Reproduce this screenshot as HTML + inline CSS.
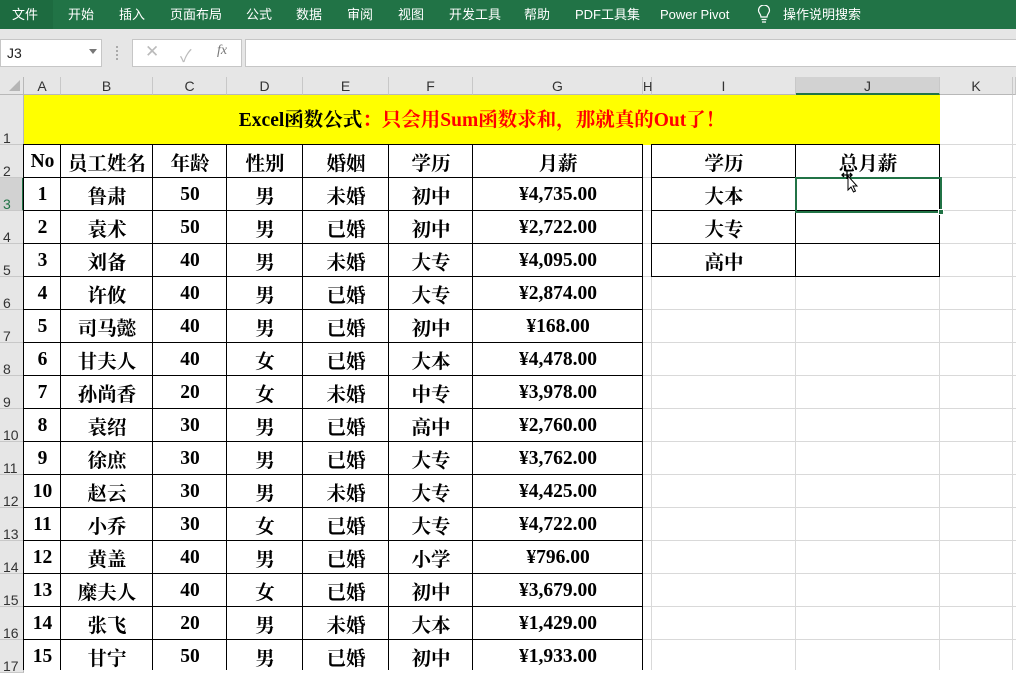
<!DOCTYPE html>
<html><head><meta charset="utf-8"><style>
*{margin:0;padding:0;box-sizing:border-box}
body{width:1016px;height:670px;overflow:hidden;background:#fff;position:relative;font-family:"Liberation Sans","Noto Sans CJK SC",sans-serif}
.rib{position:absolute;left:0;top:0;width:1016px;height:29px;background:#217346;color:#fff;font-size:13px}
.rib span{position:absolute;top:0;height:29px;line-height:29px;white-space:nowrap}
.band{position:absolute;left:0;top:29px;width:1016px;height:48px;background:#e6e6e6}
.box{position:absolute;background:#fff;border:1px solid #c6c6c6}
.ch{position:absolute;top:77px;height:18px;background:#e6e6e6;font-size:14px;color:#333;text-align:center;line-height:19px;border-right:1px solid #c8c8c8;border-bottom:1px solid #b8b8b8}
.rh{position:absolute;left:0;width:24px;background:#e6e6e6;font-size:14px;color:#333;border-bottom:1px solid #c8c8c8;border-right:1px solid #b8b8b8}
.rh i{position:absolute;left:3px;bottom:-2px;font-style:normal}
table{position:absolute;border-spacing:0;table-layout:fixed;font-family:"Liberation Serif","Noto Serif CJK SC",serif;font-weight:bold;font-size:19.5px;color:#000}
td{height:33px;text-align:center;padding:0;white-space:nowrap}
</style></head><body>
<div class="rib">
<div style="position:absolute;left:0;top:0;width:53px;height:29px;background:#1d6b40"></div>
<span style="left:12px">文件</span><span style="left:68px">开始</span><span style="left:119px">插入</span><span style="left:170px">页面布局</span><span style="left:246px">公式</span><span style="left:296px">数据</span><span style="left:347px">审阅</span><span style="left:398px">视图</span><span style="left:449px">开发工具</span><span style="left:524px">帮助</span><span style="left:575px">PDF工具集</span><span style="left:660px">Power Pivot</span>
<svg style="position:absolute;left:757px;top:5px" width="14" height="19" viewBox="0 0 14 19"><path d="M4 12 C4 9 1.5 8 1.5 5.5 A5.5 5.5 0 0 1 12.5 5.5 C12.5 8 10 9 10 12 Z M4.5 14.5h5 M5 17h4" fill="none" stroke="#fff" stroke-width="1.2"/></svg>
<span style="left:783px">操作说明搜索</span>
</div>
<div class="band"></div>
<div class="box" style="left:0;top:39px;width:102px;height:28px"><span style="position:absolute;left:6px;top:5px;font-size:14px;color:#222">J3</span><span style="position:absolute;left:88px;top:9px;width:0;height:0;border-left:4px solid transparent;border-right:4px solid transparent;border-top:5px solid #777"></span></div>
<div style="position:absolute;left:116px;top:46px;width:2px;height:14px;border-left:2px dotted #aaa"></div>
<div class="box" style="left:132px;top:39px;width:110px;height:28px;color:#bbb;font-size:17px"><span style="position:absolute;left:12px;top:2px">✕</span><span style="position:absolute;left:47px;top:2px">✓</span><span style="position:absolute;left:84px;top:3px;font-family:'Liberation Serif',serif;font-style:italic;color:#777;font-size:14px">fx</span></div>
<div class="box" style="left:245px;top:39px;width:780px;height:28px"></div>

<div style="position:absolute;left:0;top:77px;width:24px;height:18px;background:#e6e6e6;border-right:1px solid #b8b8b8;border-bottom:1px solid #b8b8b8"><div style="position:absolute;right:3px;bottom:3px;width:0;height:0;border-left:11px solid transparent;border-bottom:11px solid #b5b5b5"></div></div>
<div class="ch" style="left:24px;width:37px">A</div>
<div class="ch" style="left:61px;width:92px">B</div>
<div class="ch" style="left:153px;width:74px">C</div>
<div class="ch" style="left:227px;width:76px">D</div>
<div class="ch" style="left:303px;width:86px">E</div>
<div class="ch" style="left:389px;width:84px">F</div>
<div class="ch" style="left:473px;width:170px">G</div>
<div class="ch" style="left:643px;width:9px;font-size:13px">H</div>
<div class="ch" style="left:652px;width:144px">I</div>
<div class="ch" style="left:796px;width:144px;background:#d2d2d2;border-bottom:2px solid #217346">J</div>
<div class="ch" style="left:940px;width:73px">K</div>
<div class="ch" style="left:1013px;width:3px"></div>

<div class="rh" style="top:95px;height:50px"><i>1</i></div>
<div class="rh" style="top:145px;height:33px"><i>2</i></div>
<div class="rh" style="top:178px;height:33px;background:#d2d2d2;border-right:2px solid #217346;color:#217346"><i>3</i></div>
<div class="rh" style="top:211px;height:33px"><i>4</i></div>
<div class="rh" style="top:244px;height:33px"><i>5</i></div>
<div class="rh" style="top:277px;height:33px"><i>6</i></div>
<div class="rh" style="top:310px;height:33px"><i>7</i></div>
<div class="rh" style="top:343px;height:33px"><i>8</i></div>
<div class="rh" style="top:376px;height:33px"><i>9</i></div>
<div class="rh" style="top:409px;height:33px"><i>10</i></div>
<div class="rh" style="top:442px;height:33px"><i>11</i></div>
<div class="rh" style="top:475px;height:33px"><i>12</i></div>
<div class="rh" style="top:508px;height:33px"><i>13</i></div>
<div class="rh" style="top:541px;height:33px"><i>14</i></div>
<div class="rh" style="top:574px;height:33px"><i>15</i></div>
<div class="rh" style="top:607px;height:33px"><i>16</i></div>
<div class="rh" style="top:640px;height:33px"><i>17</i></div>

<svg style="position:absolute;left:0;top:0" width="1016" height="670">
<g stroke="#d9d9d9" stroke-width="1">
<path d="M24 144.5H1016 M24 177.5H1016 M24 210.5H1016 M24 243.5H1016 M24 276.5H1016 M24 309.5H1016 M24 342.5H1016 M24 375.5H1016 M24 408.5H1016 M24 441.5H1016 M24 474.5H1016 M24 507.5H1016 M24 540.5H1016 M24 573.5H1016 M24 606.5H1016 M24 639.5H1016"/>
<path d="M60.5 95V670 M152.5 95V670 M226.5 95V670 M302.5 95V670 M388.5 95V670 M472.5 95V670 M642.5 95V670 M651.5 95V670 M795.5 95V670 M939.5 95V670 M1012.5 95V670"/>
</g>
<rect x="24" y="95" width="916" height="50" fill="#ffff00"/>
<g stroke="#000" stroke-width="1">
<path d="M23 144.5H643 M23 177.5H643 M23 210.5H643 M23 243.5H643 M23 276.5H643 M23 309.5H643 M23 342.5H643 M23 375.5H643 M23 408.5H643 M23 441.5H643 M23 474.5H643 M23 507.5H643 M23 540.5H643 M23 573.5H643 M23 606.5H643 M23 639.5H643"/>
<path d="M23.5 144V670 M60.5 144V670 M152.5 144V670 M226.5 144V670 M302.5 144V670 M388.5 144V670 M472.5 144V670 M642.5 144V670"/>
<path d="M652 144.5H940 M652 177.5H940 M652 210.5H940 M652 243.5H940 M652 276.5H940 M651.5 144V277 M795.5 144V277 M939.5 144V277"/>
</g>
</svg>

<div style="position:absolute;left:24px;top:95px;width:916px;height:50px;line-height:52px;text-align:center;font-family:'Liberation Serif','Noto Serif CJK SC',serif;font-weight:bold;font-size:19.5px;white-space:nowrap">Excel函数公式<span style="color:#f00">：只会用Sum函数求和，那就真的Out了！</span></div>

<table style="left:24px;top:145px">
<colgroup><col style="width:37px"><col style="width:92px"><col style="width:74px"><col style="width:76px"><col style="width:86px"><col style="width:84px"><col style="width:170px"></colgroup>
<tr><td>No</td><td>员工姓名</td><td>年龄</td><td>性别</td><td>婚姻</td><td>学历</td><td>月薪</td></tr>
<tr><td>1</td><td>鲁肃</td><td>50</td><td>男</td><td>未婚</td><td>初中</td><td>¥4,735.00</td></tr>
<tr><td>2</td><td>袁术</td><td>50</td><td>男</td><td>已婚</td><td>初中</td><td>¥2,722.00</td></tr>
<tr><td>3</td><td>刘备</td><td>40</td><td>男</td><td>未婚</td><td>大专</td><td>¥4,095.00</td></tr>
<tr><td>4</td><td>许攸</td><td>40</td><td>男</td><td>已婚</td><td>大专</td><td>¥2,874.00</td></tr>
<tr><td>5</td><td>司马懿</td><td>40</td><td>男</td><td>已婚</td><td>初中</td><td>¥168.00</td></tr>
<tr><td>6</td><td>甘夫人</td><td>40</td><td>女</td><td>已婚</td><td>大本</td><td>¥4,478.00</td></tr>
<tr><td>7</td><td>孙尚香</td><td>20</td><td>女</td><td>未婚</td><td>中专</td><td>¥3,978.00</td></tr>
<tr><td>8</td><td>袁绍</td><td>30</td><td>男</td><td>已婚</td><td>高中</td><td>¥2,760.00</td></tr>
<tr><td>9</td><td>徐庶</td><td>30</td><td>男</td><td>已婚</td><td>大专</td><td>¥3,762.00</td></tr>
<tr><td>10</td><td>赵云</td><td>30</td><td>男</td><td>未婚</td><td>大专</td><td>¥4,425.00</td></tr>
<tr><td>11</td><td>小乔</td><td>30</td><td>女</td><td>已婚</td><td>大专</td><td>¥4,722.00</td></tr>
<tr><td>12</td><td>黄盖</td><td>40</td><td>男</td><td>已婚</td><td>小学</td><td>¥796.00</td></tr>
<tr><td>13</td><td>糜夫人</td><td>40</td><td>女</td><td>已婚</td><td>初中</td><td>¥3,679.00</td></tr>
<tr><td>14</td><td>张飞</td><td>20</td><td>男</td><td>未婚</td><td>大本</td><td>¥1,429.00</td></tr>
<tr><td>15</td><td>甘宁</td><td>50</td><td>男</td><td>已婚</td><td>初中</td><td>¥1,933.00</td></tr>
</table>

<table style="left:652px;top:145px">
<colgroup><col style="width:144px"><col style="width:144px"></colgroup>
<tr><td>学历</td><td>总月薪</td></tr>
<tr><td>大本</td><td></td></tr>
<tr><td>大专</td><td></td></tr>
<tr><td>高中</td><td></td></tr>
</table>

<div style="position:absolute;left:795px;top:177px;width:147px;height:36px;border:2px solid #217346"></div>
<div style="position:absolute;left:938px;top:209px;width:6px;height:6px;background:#217346;border:1px solid #fff"></div>
<svg style="position:absolute;left:840px;top:170px" width="24" height="26" viewBox="0 0 24 26"><path d="M2 5h10 M7 1v8 M4 3 2 5 4 7 M10 3 12 5 10 7" stroke="#000" stroke-width="1.3" fill="none"/><path d="M8 6 L8 20 L11 17 L13.5 22 L15.5 21 L13 16 L17 16 Z" fill="#fff" stroke="#000" stroke-width="1"/></svg>
</body></html>
